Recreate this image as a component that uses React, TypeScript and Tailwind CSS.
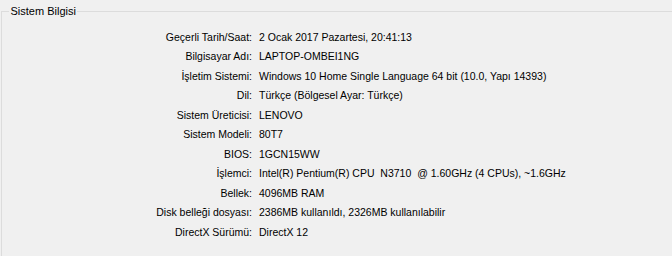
const rows: [string, string][] = [
  ['Geçerli Tarih/Saat:', '2 Ocak 2017 Pazartesi, 20:41:13'],
  ['Bilgisayar Adı:', 'LAPTOP-OMBEI1NG'],
  ['İşletim Sistemi:', 'Windows 10 Home Single Language 64 bit (10.0, Yapı 14393)'],
  ['Dil:', 'Türkçe (Bölgesel Ayar: Türkçe)'],
  ['Sistem Üreticisi:', 'LENOVO'],
  ['Sistem Modeli:', '80T7'],
  ['BIOS:', '1GCN15WW'],
  ['İşlemci:', 'Intel(R) Pentium(R) CPU  N3710  @ 1.60GHz (4 CPUs), ~1.6GHz'],
  ['Bellek:', '4096MB RAM'],
  ['Disk belleği dosyası:', '2386MB kullanıldı, 2326MB kullanılabilir'],
  ['DirectX Sürümü:', 'DirectX 12'],
];

export default function App() {
  return (
    <div className="h-[256px] w-[672px] overflow-hidden bg-[#f0f0f0] pl-px pt-[4px] font-['Liberation_Sans',Arial,sans-serif] text-[10.5px] text-black">
      <fieldset className="h-[270px] border border-r-0 border-[#dcdcdc] pl-[7px]">
        <legend className="px-[1.5px] text-[11px] leading-[14px]">Sistem Bilgisi</legend>
        <div className="mt-[9.5px] grid grid-cols-[243px_1fr] gap-x-[7px]">
          {rows.map(([label, value]) => (
            <div key={label} className="contents">
              <div className="whitespace-pre text-right leading-[19.5px]">{label}</div>
              <div className="whitespace-pre leading-[19.5px]">{value}</div>
            </div>
          ))}
        </div>
      </fieldset>
    </div>
  );
}
